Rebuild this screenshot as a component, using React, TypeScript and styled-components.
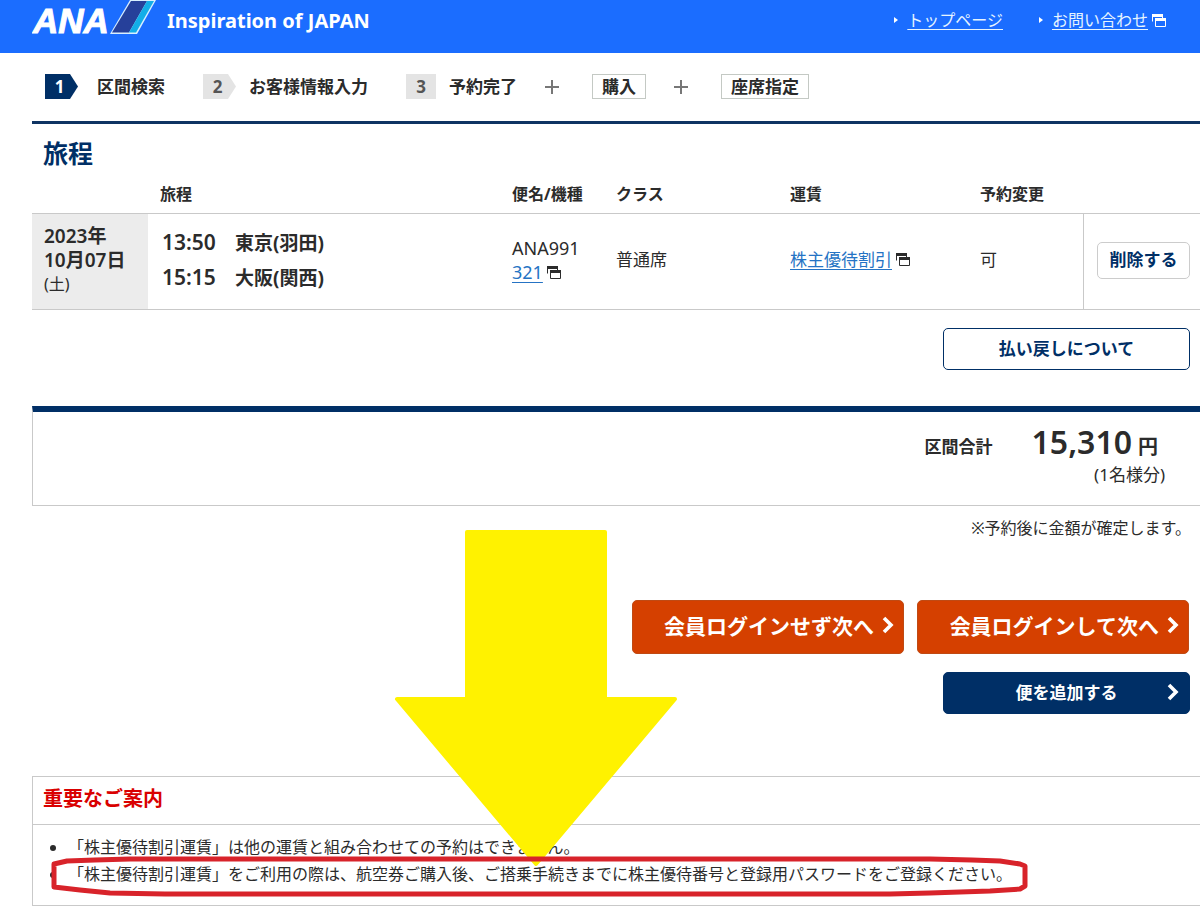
import React from 'react';
import styled, { createGlobalStyle } from 'styled-components';

const navy = '#002f66';
const line = '#c9c9c9';

const GlobalStyle = createGlobalStyle`
  * { box-sizing: border-box; }
  body {
    margin: 0;
    background: #fff;
    color: #2b2b2b;
    font-family: "Noto Sans", "Noto Sans CJK JP", sans-serif;
    font-size: 17px;
    line-height: 24px;
    overflow-x: hidden;
  }
  button { font-family: inherit; cursor: pointer; }
`;

const Header = styled.header`
  display: flex;
  align-items: flex-start;
  justify-content: space-between;
  height: 53px;
  padding: 0 34px 0 32px;
  background: #1b6dff;
  color: #fff;
`;

const Brand = styled.a`
  display: flex;
  color: inherit;
  text-decoration: none;
`;

const Tagline = styled.span`
  margin-left: 10px;
  padding-top: 5px;
  font-size: 20px;
  line-height: 32px;
  font-weight: 700;
`;

const HeaderNav = styled.nav`
  display: flex;
  gap: 36px;
  padding-top: 8px;
  font-size: 16px;
`;

const NavItem = styled.span`
  display: flex;
  align-items: center;
  gap: 4px;

  &::before {
    content: '';
    margin-right: 5px;
    border-left: 4px solid #fff;
    border-top: 3px solid transparent;
    border-bottom: 3px solid transparent;
  }
`;

const HeaderLink = styled.a`
  color: #e6f4ff;
  text-underline-offset: 3px;
`;

const Main = styled.main`
  position: relative;
  padding-left: 32px;
`;

const Steps = styled.ol`
  display: flex;
  align-items: center;
  margin: 0;
  padding: 21px 0 22px 13px;
  border-bottom: 3px solid #0f3463;
  list-style: none;
  font-weight: 700;
  line-height: 25px;
`;

const Step = styled.li<{ $gap: number }>`
  display: flex;
  align-items: center;
  gap: ${(p) => p.$gap}px;
  margin-right: 38px;
`;

const StepNumber = styled.span<{ $current?: boolean; $last?: boolean }>`
  width: ${(p) => (p.$last ? 30 : 33)}px;
  padding-right: ${(p) => (p.$last ? 0 : 4)}px;
  height: 25px;
  text-align: center;
  background: ${(p) => (p.$current ? navy : '#e4e4e4')};
  color: ${(p) => (p.$current ? '#fff' : '#555')};
  clip-path: ${(p) =>
    p.$last ? 'none' : 'polygon(0 0, 25px 0, 100% 50%, 25px 100%, 0 100%)'};
`;

const OptionalStep = styled.li`
  display: flex;
  align-items: center;
  gap: 33px;
  margin-right: 28px;

  &:nth-of-type(4) { margin-left: -10px; }
`;

const OptionLabel = styled.span`
  padding: 0 9px;
  border: 1px solid #c4c9c4;
  line-height: 23px;
`;

const PageTitle = styled.h1`
  margin: 13px 0 3px 11px;
  color: ${navy};
  font-size: 25px;
  line-height: 32px;
`;

const Itinerary = styled.table`
  width: 100%;
  border-collapse: separate;
  border-spacing: 0;
  table-layout: fixed;
  text-align: left;

  th, td {
    padding: 0 0 0 12px;
    border-bottom: 1px solid ${line};
  }
  thead th {
    height: 42px;
    padding-top: 2px;
    font-size: 16px;
    font-weight: 700;
  }
  tbody tr { height: 96px; }
  tbody th, tbody td { padding-bottom: 3px; }
`;

const Col = styled.col<{ $w?: number }>`
  width: ${(p) => (p.$w ? `${p.$w}px` : 'auto')};
`;

const DateCell = styled.th`
  background: #ececec;
`;

const DateLine = styled.span<{ $light?: boolean }>`
  display: block;
  font-size: ${(p) => (p.$light ? 16 : 19)}px;
  font-weight: ${(p) => (p.$light ? 400 : 600)};
  line-height: 24px;
`;

const TimeDigits = styled.span`
  font-size: 21px;
  font-weight: 600;
`;

const Leg = styled.div`
  display: grid;
  grid-template-columns: 73px auto;
  align-items: baseline;
  padding-left: 2px;
  font-size: 19px;
  font-weight: 700;
  line-height: 30px;

  & + & { margin-top: 4px; }
`;

const Flight = styled.div`
  font-size: 18px;
  line-height: 24px;
`;

const TextLink = styled.a`
  margin-right: 4px;
  color: #2573c4;
  text-underline-offset: 3px;
`;

const ActionCell = styled.td`
  && { border-left: 1px solid ${line}; padding-left: 13px; }
`;

const SmallButton = styled.button`
  height: 37px;
  width: 93px;
  padding: 0 0 3px;
  border: 1px solid #ccc;
  border-radius: 5px;
  background: #fff;
  color: ${navy};
  font-size: 17px;
  font-weight: 700;
`;

const ButtonRow = styled.div<{ $top: number; $right?: number }>`
  display: flex;
  justify-content: flex-end;
  gap: 13px;
  margin-top: ${(p) => p.$top}px;
  padding-right: ${(p) => p.$right ?? 10}px;
`;

const WideButton = styled.button<{ $filled?: boolean }>`
  display: grid;
  grid-template-columns: 20px 1fr 20px;
  align-items: center;
  width: 247px;
  height: 42px;
  padding: 0 6px 3px;
  border: 1px solid ${navy};
  border-radius: 5px;
  background: ${(p) => (p.$filled ? navy : '#fff')};
  color: ${(p) => (p.$filled ? '#fff' : navy)};
  font-size: 17px;
  font-weight: 700;

  span { grid-column: 2; }
  svg { justify-self: center; }
`;

const NextButton = styled.button`
  display: flex;
  align-items: center;
  justify-content: flex-end;
  gap: 8px;
  width: 272px;
  height: 54px;
  padding: 0 9px 4px;
  border: 1px solid #bf4a14;
  border-radius: 5px;
  background: #d54000;
  color: #fff;
  font-size: 21px;
  font-weight: 700;
`;

const Total = styled.section`
  display: flex;
  justify-content: flex-end;
  gap: 39px;
  height: 100px;
  margin-top: 36px;
  padding: 14px 35px 0 0;
  border: 1px solid ${line};
  border-top: 6px solid ${navy};
  border-right: 0;
`;

const TotalLabel = styled.span`
  padding-top: 9px;
  font-weight: 700;
`;

const Amount = styled.div`
  text-align: right;
  font-size: 17px;
`;

const Price = styled.div`
  padding-right: 7px;
  font-size: 20px;
  font-weight: 700;
  line-height: 32px;
`;

const PriceDigits = styled.span`
  margin-right: 6px;
  font-size: 32px;
  font-weight: 600;
`;

const Remark = styled.p`
  margin: 10px 9px 0 0;
  font-size: 16px;
  text-align: right;
`;

const Notice = styled.section`
  position: relative;
  margin-top: 62px;
  border: 1px solid ${line};
  border-right: 0;
`;

const NoticeTitle = styled.h2`
  margin: 0;
  padding: 8px 0 11px 10px;
  border-bottom: 1px solid ${line};
  color: #d90000;
  font-size: 20px;
  line-height: 28px;
`;

const NoticeList = styled.ul`
  margin: 0;
  padding: 9px 0 17px 35px;
  font-size: 16px;
  line-height: 27px;
`;

const PointerArrow = styled.svg`
  position: absolute;
  left: 360px;
  bottom: 35px;
  pointer-events: none;
`;

const Highlight = styled.svg`
  position: absolute;
  left: 17px;
  bottom: 8px;
  pointer-events: none;
`;

const WindowIcon = ({ color = '#2b2b2b', back = '#fff' }: { color?: string; back?: string }) => (
  <svg width="14" height="13" viewBox="0 0 14 13" aria-hidden="true">
    <path d="M.5 7.500V.5H10.500V4" fill="none" stroke={color} />
    <path d="M0 0H11V3H0Z" fill={color} />
    <path d="M3.500 4.500H13.500V12.500H3.500Z" fill={back} stroke={color} />
    <path d="M3 4H14V7H3Z" fill={color} />
  </svg>
);

const Chevron = () => (
  <svg width="12" height="18" viewBox="0 0 12 18" aria-hidden="true">
    <path d="M2 2L9 9L2 16" fill="none" stroke="#fff" strokeWidth="3.600" />
  </svg>
);

const PlusSign = () => (
  <svg width="14" height="14" viewBox="0 0 14 14" role="img" aria-label="+">
    <path d="M7 0V14M0 7H14" stroke="#777" strokeWidth="2" />
  </svg>
);

const Logo = () => (
  <svg width="125" height="44" viewBox="0 0 125 44" role="img" aria-label="ANA">
    <text
      x="1"
      y="33"
      fill="#fff"
      stroke="#fff"
      strokeWidth="1"
      fontFamily="Liberation Sans, sans-serif"
      fontSize="35"
      fontWeight="700"
      fontStyle="italic"
    >
      ANA
    </text>
    <path d="M98 0H124L105 34H78Z" fill="#d9efff" />
    <path d="M99 1H115L97 32.500H80Z" fill="#26409a" />
    <path d="M115 1H122L104 32.500H97Z" fill="#13aee8" />
  </svg>
);

export default function App() {
  return (
    <>
      <GlobalStyle />
      <Header>
        <Brand href="#">
          <Logo />
          <Tagline>Inspiration of JAPAN</Tagline>
        </Brand>
        <HeaderNav>
          <NavItem>
            <HeaderLink href="#">トップページ</HeaderLink>
          </NavItem>
          <NavItem>
            <HeaderLink href="#">お問い合わせ</HeaderLink>
            <WindowIcon color="#fff" back="#1b6dff" />
          </NavItem>
        </HeaderNav>
      </Header>

      <Main>
        <Steps>
          <Step $gap={19}>
            <StepNumber $current>1</StepNumber>区間検索
          </Step>
          <Step $gap={13}>
            <StepNumber>2</StepNumber>お客様情報入力
          </Step>
          <Step $gap={13}>
            <StepNumber $last>3</StepNumber>予約完了
          </Step>
          <OptionalStep>
            <PlusSign />
            <OptionLabel>購入</OptionLabel>
          </OptionalStep>
          <OptionalStep>
            <PlusSign />
            <OptionLabel>座席指定</OptionLabel>
          </OptionalStep>
        </Steps>

        <PageTitle>旅程</PageTitle>
        <Itinerary>
          <colgroup>
            <Col $w={116} />
            <Col />
            <Col $w={104} />
            <Col $w={174} />
            <Col $w={190} />
            <Col $w={115} />
            <Col $w={117} />
          </colgroup>
          <thead>
            <tr>
              <th />
              <th scope="col">旅程</th>
              <th scope="col">便名/機種</th>
              <th scope="col">クラス</th>
              <th scope="col">運賃</th>
              <th scope="col">予約変更</th>
              <th />
            </tr>
          </thead>
          <tbody>
            <tr>
              <DateCell scope="row">
                <DateLine>2023年</DateLine>
                <DateLine>10月07日</DateLine>
                <DateLine $light>(土)</DateLine>
              </DateCell>
              <td>
                <Leg>
                  <TimeDigits>13:50</TimeDigits>
                  <span>東京(羽田)</span>
                </Leg>
                <Leg>
                  <TimeDigits>15:15</TimeDigits>
                  <span>大阪(関西)</span>
                </Leg>
              </td>
              <td>
                <Flight>ANA991</Flight>
                <Flight>
                  <TextLink href="#">321</TextLink>
                  <WindowIcon />
                </Flight>
              </td>
              <td>普通席</td>
              <td>
                <TextLink href="#">株主優待割引</TextLink>
                <WindowIcon />
              </td>
              <td>可</td>
              <ActionCell>
                <SmallButton type="button">削除する</SmallButton>
              </ActionCell>
            </tr>
          </tbody>
        </Itinerary>

        <ButtonRow $top={18}>
          <WideButton type="button">
            <span>払い戻しについて</span>
          </WideButton>
        </ButtonRow>

        <Total>
          <TotalLabel>区間合計</TotalLabel>
          <Amount>
            <Price>
              <PriceDigits>15,310</PriceDigits>円
            </Price>
            (1名様分)
          </Amount>
        </Total>
        <Remark>※予約後に金額が確定します。</Remark>

        <ButtonRow $top={60} $right={11}>
          <NextButton type="button">
            会員ログインせず次へ
            <Chevron />
          </NextButton>
          <NextButton type="button">
            会員ログインして次へ
            <Chevron />
          </NextButton>
        </ButtonRow>
        <ButtonRow $top={18}>
          <WideButton type="button" $filled>
            <span>便を追加する</span>
            <Chevron />
          </WideButton>
        </ButtonRow>

        <Notice>
          <NoticeTitle>重要なご案内</NoticeTitle>
          <NoticeList>
            <li>「株主優待割引運賃」は他の運賃と組み合わせての予約はできません。</li>
            <li>
              「株主優待割引運賃」をご利用の際は、航空券ご購入後、ご搭乗手続きまでに株主優待番号と登録用パスワードをご登録ください。
            </li>
          </NoticeList>
          <PointerArrow width="286" height="342" viewBox="0 0 286 342" aria-hidden="true">
            <path
              d="M74 4H212V171H282L143 336L4 171H74Z"
              fill="#fff200"
              stroke="#fff200"
              strokeWidth="4"
              strokeLinejoin="round"
            />
          </PointerArrow>
          <Highlight width="980" height="42" viewBox="0 0 980 42" aria-hidden="true">
            <path
              d="M4 9L17 6L45 5L80 4H880L922 5L950 6L970 9L975 11V31L970 34L940 36L880 38L840 39H115L60 38L30 35L4 32Z"
              fill="none"
              stroke="#d8232a"
              strokeWidth="5"
              strokeLinejoin="round"
            />
          </Highlight>
        </Notice>
      </Main>
    </>
  );
}
